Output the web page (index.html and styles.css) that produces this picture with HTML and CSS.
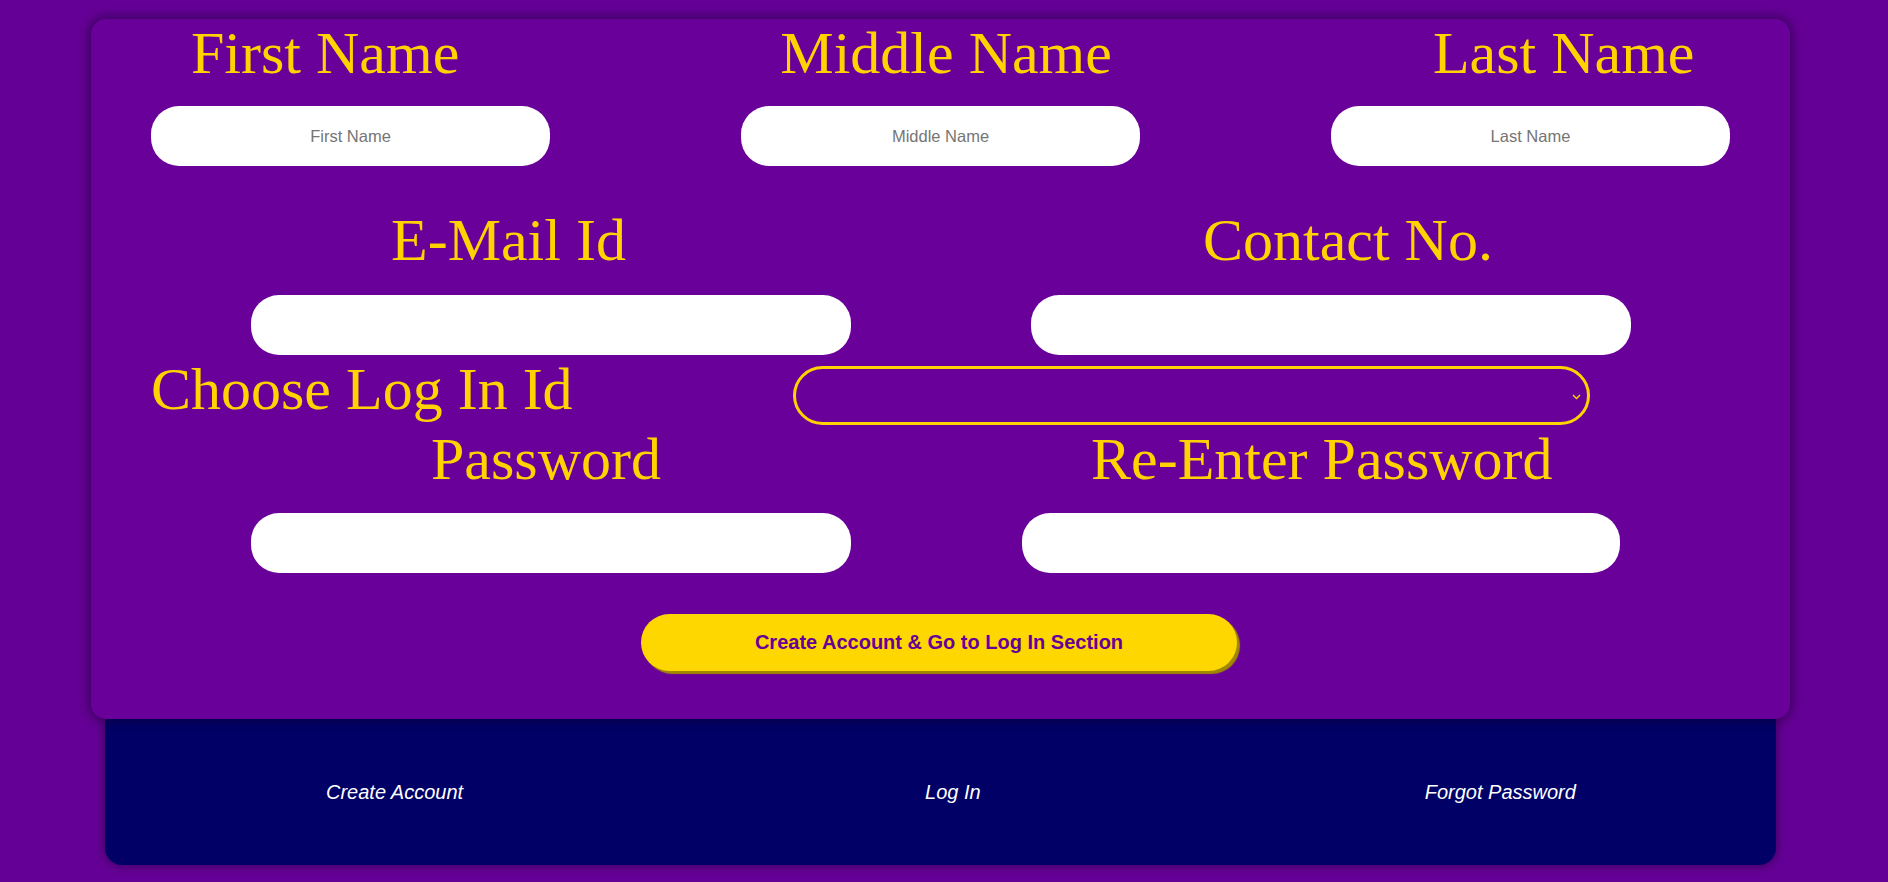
FILE: index.html
```html
<!DOCTYPE html>
<html lang="en">
<head>
<meta charset="utf-8">
<title>Create Account</title>
<link rel="stylesheet" href="styles.css">
</head>
<body>
<div class="page">
  <form class="card">
    <div class="row labels-3">
      <span class="label">First Name</span>
      <span class="label">Middle Name</span>
      <span class="label">Last Name</span>
    </div>
    <div class="row inputs-3">
      <input class="field name" type="text" placeholder="First Name">
      <input class="field name" type="text" placeholder="Middle Name">
      <input class="field name" type="text" placeholder="Last Name">
    </div>
    <div class="row labels-2">
      <span class="label">E-Mail Id</span>
      <span class="label">Contact No.</span>
    </div>
    <div class="row inputs-2">
      <input class="field wide" type="email">
      <input class="field wide" type="tel">
    </div>
    <div class="row choose">
      <span class="label">Choose Log In Id</span>
      <div class="select-wrap">
        <select class="select"><option></option></select>
        <svg class="chev" width="9" height="6" viewBox="0 0 9 6"><path d="M1 1 L4.5 4.6 L8 1" fill="none" stroke="#ffd700" stroke-width="1.4"/></svg>
      </div>
    </div>
    <div class="row labels-pw">
      <span class="label">Password</span>
      <span class="label">Re-Enter Password</span>
    </div>
    <div class="row inputs-pw">
      <input class="field wide" type="password">
      <input class="field wide pw2" type="password">
    </div>
    <button class="submit" type="button">Create Account &amp; Go to Log In Section</button>
  </form>
  <footer class="footer">
    <a class="link first" href="#">Create Account</a>
    <a class="link mid" href="#">Log In</a>
    <a class="link last" href="#">Forgot Password</a>
  </footer>
</div>
</body>
</html>
```
FILE: styles.css
```css
html, body {
  margin: 0;
  padding: 0;
}
body {
  background: #650096;
  height: 882px;
  overflow: hidden;
  font-family: "Liberation Sans", Arial, sans-serif;
}
.page {
  padding-top: 19px;
}
.card {
  position: relative;
  z-index: 1;
  box-sizing: border-box;
  margin-left: 91px;
  width: 1699px;
  height: 700px;
  background: #690099;
  border-radius: 15px;
  box-shadow: 0 0 11px 2px rgba(20, 0, 40, 0.55);
  display: flex;
  flex-direction: column;
  align-items: flex-start;
}
.row {
  display: flex;
  align-items: flex-start;
}
.label {
  font-family: "Liberation Serif", "Times New Roman", serif;
  font-size: 60px;
  line-height: 69px;
  color: #ffd200;
  white-space: nowrap;
}
.field {
  box-sizing: border-box;
  height: 60px;
  border: none;
  border-radius: 28px;
  background: #ffffff;
  outline: none;
  font-family: "Liberation Sans", Arial, sans-serif;
  font-size: 16.5px;
  text-align: center;
  color: #222;
  padding: 0 20px;
  margin: 0;
}
.field::placeholder {
  color: #757575;
}
.name { width: 399px; }
.wide { width: 600px; }
.pw2 { width: 598px; }

.labels-3 { padding-left: 100px; gap: 321px; }
.inputs-3 { padding-left: 60px; gap: 191px; margin-top: 18px; }
.labels-2 { padding-left: 300px; gap: 577px; margin-top: 40px; }
.inputs-2 { padding-left: 160px; gap: 180px; margin-top: 20px; }
.choose { padding-left: 60px; gap: 220px; }
.labels-pw { padding-left: 340px; gap: 430px; }
.inputs-pw { padding-left: 160px; gap: 171px; margin-top: 19px; }

.select-wrap {
  position: relative;
  margin-top: 11px;
}
.select {
  display: block;
  box-sizing: border-box;
  width: 797px;
  height: 59px;
  border: 3px solid #ffd200;
  border-radius: 30px;
  background: transparent;
  color: #ffd200;
  appearance: none;
  -webkit-appearance: none;
  outline: none;
  margin: 0;
}
.chev {
  position: absolute;
  right: 9px;
  top: 28px;
}
.submit {
  margin-top: 41px;
  margin-left: 550px;
  width: 596px;
  height: 57px;
  border: none;
  border-radius: 29px;
  background: #ffd700;
  color: #660099;
  font-family: "Liberation Sans", Arial, sans-serif;
  font-weight: bold;
  font-size: 20px;
  box-shadow: 3px 3px 1px #a08800;
  cursor: pointer;
  padding: 0;
}
.footer {
  box-sizing: border-box;
  margin-left: 105px;
  width: 1671px;
  height: 146px;
  background: #000066;
  border-radius: 0 0 17px 17px;
  box-shadow: 0 0 10px 1px rgba(20, 0, 40, 0.5);
  display: flex;
  align-items: center;
  padding-left: 221px;
}
.link {
  color: #ffffff;
  font-style: italic;
  font-size: 20px;
  line-height: 23px;
  text-decoration: none;
  white-space: nowrap;
}
.mid { margin-left: 462px; }
.last { margin-left: 444px; }
```
